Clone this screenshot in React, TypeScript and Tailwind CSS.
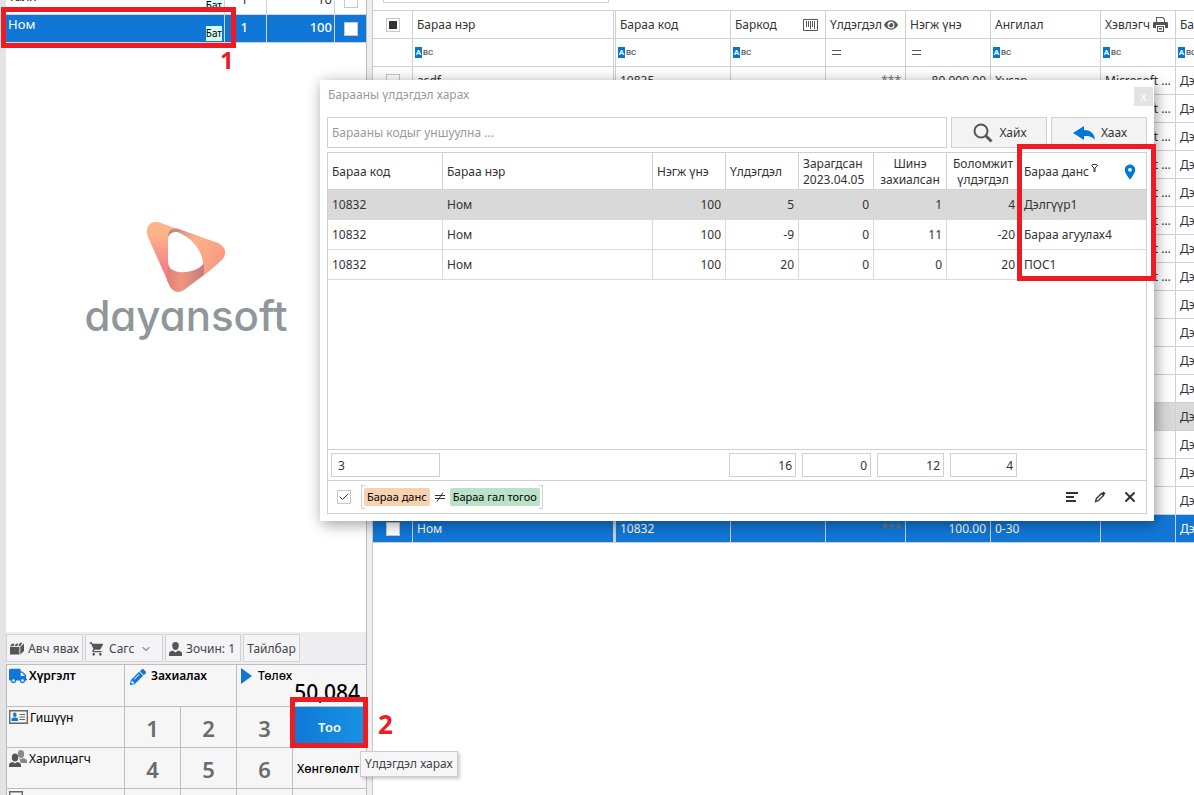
import React from 'react';
import { Check, ChevronDown, X } from 'lucide-react';
import { FaEye, FaPencilAlt, FaTruck } from 'react-icons/fa';
import { MdPlace, MdShoppingCart } from 'react-icons/md';

const stockRows = [
  { code: '10832', name: 'Ном', price: '100', stock: '5', spent: '0', ordered: '1', available: '4', account: 'Дэлгүүр1' },
  { code: '10832', name: 'Ном', price: '100', stock: '-9', spent: '0', ordered: '11', available: '-20', account: 'Бараа агуулах4' },
  { code: '10832', name: 'Ном', price: '100', stock: '20', spent: '0', ordered: '0', available: '20', account: 'ПОС1' },
];

const emptyProduct = { name: '', code: '', stock: '', price: '', category: '', printer: '', account: 'Дэлгүүр' };

const productRows = [
  { ...emptyProduct, name: 'asdf', code: '10835', stock: '***', price: '80,000.00', category: 'Хусар', printer: 'Microsoft Print' },
  ...Array.from({ length: 7 }, () => ({ ...emptyProduct, printer: 'Microsoft Print' })),
  ...Array.from({ length: 8 }, () => emptyProduct),
  { ...emptyProduct, name: 'Ном', code: '10832', stock: '***', price: '100.00', category: '0-30' },
];

const HOVER_ROW = 12;
const SELECTED_ROW = 16;

const Barcode = () => (
  <svg width="15" height="12" viewBox="0 0 15 12" fill="none" stroke="#555" className="shrink-0">
    <path d="M.5.5h14v11H.5zM3.5 2v6M5.5 2v6M7.5 2v8M9.5 2v6M11.5 2v8" />
  </svg>
);

const Printer = () => (
  <svg width="15" height="15" viewBox="0 0 15 15" fill="#555" className="shrink-0">
    <path d="M3 0h7l2 2v3h-1V2.500L9.500 1H4v4H3z" />
    <path d="M1 5h13q1 0 1 1v5h-3V8H3v3H0V6q0-1 1-1z" />
    <path fillRule="evenodd" d="M4 9h7v6H4zm1 1v4h5v-4z" />
    <path d="M6 11h3v1H6zM6 12.500h3v.5H6z" />
  </svg>
);

const Magnifier = () => (
  <svg width="20" height="20" viewBox="0 0 20 20" fill="none" stroke="#555">
    <circle cx="8" cy="8" r="6.500" strokeWidth="2" />
    <path d="M12.500 12.500l6 6" strokeWidth="3" />
  </svg>
);

const BackArrow = () => (
  <svg width="22" height="14" viewBox="0 0 22 14" fill="#0078d7">
    <path d="M0 7L11 0v4C17 4 21.500 7 22 14 19.500 10.500 16 10 11 10v4z" />
  </svg>
);

const Box = () => (
  <svg width="15" height="13" viewBox="0 0 15 13" fill="#555">
    <path d="M0 5h10v8H0zM2 1.500h3L3.500 4H0zM6.500 1.500H9L7.500 4H4.800zM10.500.5h2.500L11 4H8.800zM11 5l4-4v8l-4 4z" />
  </svg>
);

const Person = () => (
  <svg width="13" height="14" viewBox="0 0 13 14" fill="#555">
    <path d="M6.500 0C9 0 9.800 1.500 9.800 3.500 9.800 6 8.500 8 6.500 8S3.200 6 3.200 3.500C3.200 1.500 4 0 6.500 0z" />
    <path d="M0 14v-2.500C0 9.500 2 9 4 8.500l2.500 2L9 8.500c2 .5 4 1 4 3V14z" />
  </svg>
);

const People = () => (
  <svg width="18" height="18" viewBox="0 0 18 18" className="shrink-0">
    <g fill="#888">
      <ellipse cx="12" cy="4" rx="3.200" ry="4" />
      <path d="M11 12v-2l-1-1.500L12 9l2-1c2 .6 4 1 4 3v2h-5.500z" />
    </g>
    <g fill="#555">
      <ellipse cx="6" cy="7.500" rx="3.200" ry="4" />
      <path d="M0 17v-2c0-2 1.800-2.400 3.800-3L6 13.500 8.200 12c2 .6 3.800 1 3.800 3v2z" />
    </g>
  </svg>
);

const IdCard = () => (
  <svg width="19" height="14" viewBox="0 0 19 14" fill="none" className="mt-px shrink-0">
    <path d="M.7.7h17.600v12.600H.7z" stroke="#666" strokeWidth="1.400" />
    <ellipse cx="5.800" cy="4.800" rx="1.800" ry="2.200" fill="#1177d7" />
    <path d="M2.500 11V9c0-1 1.500-1.500 3.300-1.500S9 8 9 9v2z" fill="#1177d7" />
    <path d="M10.500 4.500H16M10.500 7H16M10.500 9.500H16" stroke="#666" />
  </svg>
);

const DayansoftMark = () => (
  <svg width="80" height="72" viewBox="0 0 80 72">
    <defs>
      <linearGradient id="left" x1="0" y1="0" x2="0" y2="1">
        <stop offset="0.200" stopColor="#fbb487" />
        <stop offset="0.750" stopColor="#f4828a" />
      </linearGradient>
      <linearGradient id="right" x1="0" y1="0" x2="1" y2="0.600">
        <stop offset="0" stopColor="#bd7a80" />
        <stop offset="0.450" stopColor="#fbb28b" />
        <stop offset="1" stopColor="#f89a83" />
      </linearGradient>
      <linearGradient id="base" x1="0" y1="0" x2="1" y2="0">
        <stop offset="0" stopColor="#dc7f76" />
        <stop offset="0.400" stopColor="#f2957f" />
        <stop offset="1" stopColor="#c07c80" />
      </linearGradient>
    </defs>
    <path d="M1 12Q0 0 12 1L32 8Q22 8 22 18V61L2 16z" fill="url(#left)" />
    <path d="M22 40C24 54 50 54 58 42L58 54 38 69Q30 74 24 66L21 59z" fill="url(#base)" />
    <path d="M22 14Q24 6 33 8L30 7 72 22Q82 27 78 36 76 40 57 55 60 46 54 34 46 18 34 12 26 9 22 16z" fill="url(#right)" />
    <path d="M22 20Q23 10 32 12C46 16 56 30 57 42 50 52 30 54 24 47Q22 44 22 40z" fill="#fff" />
  </svg>
);

const TextFilter = () => (
  <span className="flex items-center gap-px font-[Roboto,sans-serif] text-[8px] leading-[11px] font-medium text-[#555]">
    <span className="w-[7px] bg-[#0078d7] text-center font-bold text-white">A</span>BC
  </span>
);

const EqualsFilter = () => (
  <svg width="9" height="5" viewBox="0 0 9 5" stroke="#555" className="ml-1">
    <path d="M0 .5h9M0 4.500h9" />
  </svg>
);

const CartTable: React.FC = () => (
  <div className="flex h-[43px] shrink-0 flex-col justify-end overflow-hidden">
    <table className="w-full shrink-0 table-fixed border-separate border-spacing-0 text-[13px] leading-4">
      <colgroup>
        <col />
        <col className="w-[42px]" />
        <col className="w-[68px]" />
        <col className="w-[31px]" />
      </colgroup>
      <tbody>
        {[
          { name: 'Талх', qty: '1', price: '10', selected: false },
          { name: 'Ном', qty: '1', price: '100', selected: true },
        ].map((item) => (
          <tr
            key={item.name}
            className={
              item.selected
                ? 'h-7 bg-[#1177d7] font-medium text-white *:border-r *:border-b *:border-[#cfd3dc]'
                : 'h-7 text-[#333] *:border-r *:border-b *:border-[#cfd3dc]'
            }
          >
            <td className="p-0">
              <div className="flex h-[27px] justify-between px-[2px] pb-px">
                <span className="pt-px font-normal">{item.name}</span>
                <span className="self-end bg-[#d5fbf3] text-[10px] leading-[15px] font-normal text-black">Бат</span>
              </div>
            </td>
            <td className="pr-[18px] pb-1 text-right">{item.qty}</td>
            <td className="pr-[2px] pb-1 text-right">{item.price}</td>
            <td className="border-r-0! p-0 text-center">
              <input
                type="checkbox"
                aria-label={item.name}
                className="mx-auto block size-[14px] appearance-none border border-[#c8c8c8] bg-white"
              />
            </td>
          </tr>
        ))}
      </tbody>
    </table>
  </div>
);

const Toolbar: React.FC = () => {
  const button = 'flex h-7 items-center border border-[#d2d2d6] bg-[#f4f4f6] px-[3px] pt-px whitespace-nowrap';
  return (
    <div className="flex h-8 shrink-0 items-center gap-[2px] bg-[#eeedf2] text-[12px] text-[#444]">
      <button className={`${button} w-[77px] gap-1`}>
        <Box />
        Авч явах
      </button>
      <button className={`${button} w-[78px] gap-1`}>
        <MdShoppingCart className="size-4 text-[#555]" />
        Сагс
        <ChevronDown className="ml-[2px] size-3" />
      </button>
      <button className={`${button} w-[76px] gap-1`}>
        <Person />
        Зочин: 1
      </button>
      <button className={`${button} w-[57px] justify-center`}>Тайлбар</button>
    </div>
  );
};

const Keypad: React.FC = () => {
  const key = 'border-r border-b border-[#bdbdbd] pt-[2px] text-[22px] font-semibold text-[#6b6b6b]';
  const action = 'flex items-start gap-[2px] border-r border-b border-[#bdbdbd] pt-[2px] pl-[2px] text-[12px] leading-[18px] text-black';
  return (
    <div className="h-[131px] shrink-0 overflow-hidden border-t border-l border-[#bdbdbd] bg-[#f6f6f6]">
      <div className="grid grid-cols-[118px_56px_56px_56px_1fr] grid-rows-[42px_41px_41px_41px]">
        <button className={`${action} font-semibold`}>
          <FaTruck className="size-[18px] text-[#1177d7]" />
          Хүргэлт
        </button>
        <button className={`${action} col-span-2 font-semibold`}>
          <FaPencilAlt className="mx-[3px] mt-[2px] size-4 text-[#1177d7]" />
          Захиалах
        </button>
        <button className={`${action} col-span-2 overflow-hidden border-r-0 font-medium`}>
          <svg width="11" height="16" viewBox="0 0 11 16" fill="#1177d7" className="mx-[2px] mt-px shrink-0">
            <path d="M0 0l11 8-11 8z" />
          </svg>
          <span className="pl-[2px]">Төлөх</span>
          <span className="mt-3 text-[21px] leading-[26px]">50,084</span>
        </button>

        <button className={action}>
          <IdCard />
          Гишүүн
        </button>
        <button className={key}>1</button>
        <button className={key}>2</button>
        <button className={key}>3</button>
        <button className="bg-linear-to-r from-[#1177d7] to-[#1794e3] pt-px text-[13px] font-semibold text-white">Тоо</button>

        <button className={action}>
          <People />
          Харилцагч
        </button>
        <button className={key}>4</button>
        <button className={key}>5</button>
        <button className={key}>6</button>
        <button className="border-b border-[#bdbdbd] pt-px pl-1 text-left text-[12px] font-medium whitespace-nowrap text-black">
          Хөнгөлөлт
        </button>

        <button className={action} aria-label="Карт">
          <svg width="14" height="14" viewBox="0 0 14 14" fill="none" stroke="#666">
            <path d="M.7.7h12.600v12.600H.7z" strokeWidth="1.400" />
          </svg>
        </button>
        <button className={key} aria-label="7" />
        <button className={key} aria-label="8" />
        <button className={key} aria-label="9" />
        <button className="border-b border-[#bdbdbd]" aria-label="Нэмэлт" />
      </div>
    </div>
  );
};

const ProductTable: React.FC = () => (
  <table className="w-[923px] table-fixed border-separate border-spacing-0 border-t border-[#d0d0d0] text-left text-[12px] leading-4 text-[#333]">
    <colgroup>
      <col className="w-10" />
      <col className="w-[203px]" />
      <col className="w-[115px]" />
      <col className="w-[95px]" />
      <col className="w-20" />
      <col className="w-[85px]" />
      <col className="w-[110px]" />
      <col className="w-[75px]" />
      <col className="w-[120px]" />
    </colgroup>
    <thead className="[&_th]:border-r [&_th]:border-b [&_th]:border-[#d0d0d0] [&_th]:px-1 [&_th]:py-0 [&_th]:font-normal">
      <tr className="h-7">
        <th>
          <span className="mx-auto flex size-[14px] items-center justify-center border border-[#c8c8c8]">
            <span className="size-2 bg-[#333]" />
          </span>
        </th>
        <th className="border-r-3! border-double">Бараа нэр</th>
        <th>Бараа код</th>
        <th>
          <span className="flex items-center justify-between pr-[3px]">
            Баркод <Barcode />
          </span>
        </th>
        <th>
          <span className="flex items-center justify-between pr-[3px]">
            Үлдэгдэл <FaEye className="size-[14px] shrink-0 text-[#555]" />
          </span>
        </th>
        <th>Нэгж үнэ</th>
        <th>Ангилал</th>
        <th>
          <span className="flex items-center justify-between pr-[3px]">
            Хэвлэгч <Printer />
          </span>
        </th>
        <th>Бараа данс</th>
      </tr>
      <tr className="h-7 [&_th]:px-[2px]!">
        <th />
        <th className="border-r-3! border-double"><TextFilter /></th>
        <th><TextFilter /></th>
        <th><TextFilter /></th>
        <th><EqualsFilter /></th>
        <th><EqualsFilter /></th>
        <th><TextFilter /></th>
        <th><TextFilter /></th>
        <th><TextFilter /></th>
      </tr>
    </thead>
    <tbody className="[&_td]:border-r [&_td]:border-b [&_td]:border-[#ccd0d8] [&_td]:px-1 [&_td]:py-0">
      {productRows.map((row, index) => (
        <tr
          key={index}
          className={
            index === SELECTED_ROW ? 'h-7 bg-[#1177d7] text-white' : index === HOVER_ROW ? 'h-7 bg-[#d9d9d9]' : 'h-7'
          }
        >
          <td>
            <input
              type="checkbox"
              aria-label={`Мөр ${index + 1}`}
              className="mx-auto block size-[14px] appearance-none border border-[#c8c8c8] bg-white"
            />
          </td>
          <td className={index === SELECTED_ROW ? 'border-r-3!' : 'border-r-3! border-double'}>{row.name}</td>
          <td>{row.code}</td>
          <td />
          <td className="text-right text-[#777]">{row.stock}</td>
          <td className="text-right">{row.price}</td>
          <td>{row.category}</td>
          <td className="truncate">{row.printer}</td>
          <td>{row.account}</td>
        </tr>
      ))}
    </tbody>
  </table>
);

const StockDialog: React.FC = () => (
  <div
    role="dialog"
    aria-label="Барааны үлдэгдэл харах"
    className="absolute top-20 right-10 left-80 bg-white px-[7px] pb-[7px] text-[12px] leading-4 text-[#333] shadow-[2px_3px_14px_rgba(0,0,0,0.4)]"
  >
    <div className="-mr-[6px] flex h-[37px] justify-between pt-[7px]">
      <h2 className="pl-px text-[#999]">Барааны үлдэгдэл харах</h2>
      <button aria-label="Хаах" className="size-[19px] bg-[#e3e3e3] text-center text-[12px] leading-4 text-white">
        x
      </button>
    </div>

    <div className="mb-1 flex gap-1">
      <input
        type="text"
        aria-label="Барааны код"
        placeholder="Барааны кодыг уншуулна ..."
        className="h-[31px] min-w-0 flex-1 border border-[#d0d0d0] px-1 placeholder:text-[#999]"
      />
      <button className="flex h-[31px] w-24 items-center justify-center gap-[6px] border border-[#d0d0d0] bg-[#f3f3f3] pl-[2px]">
        <Magnifier />
        Хайх
      </button>
      <button className="flex h-[31px] w-24 items-center justify-center gap-[6px] border border-[#d0d0d0] bg-[#f3f3f3] pl-[2px]">
        <BackArrow />
        Хаах
      </button>
    </div>

    <div className="border border-[#d0d0d0]">
      <div className="h-[296px]">
        <table className="w-full table-fixed border-separate border-spacing-0 text-left [&_td]:px-1 [&_td]:py-0 [&_th]:px-1 [&_th]:pt-[2px] [&_th]:pb-0 [&_th]:font-normal">
          <colgroup>
            <col className="w-[115px]" />
            <col className="w-[210px]" />
            <col className="w-[73px]" />
            <col className="w-[73px]" />
            <col className="w-[75px]" />
            <col className="w-[73px]" />
            <col className="w-[73px]" />
            <col />
          </colgroup>
          <thead>
            <tr className="h-[37px] *:border-r *:border-b *:border-[#d0d0d0]">
              <th>Бараа код</th>
              <th>Бараа нэр</th>
              <th>Нэгж үнэ</th>
              <th>Үлдэгдэл</th>
              <th>Зарагдсан 2023.04.05</th>
              <th className="text-center">Шинэ захиалсан</th>
              <th className="px-0! text-center">Боломжит үлдэгдэл</th>
              <th className="border-r-0!">
                <span className="flex items-center">
                  Бараа данс
                  <svg width="7" height="8" viewBox="0 0 7 8" fill="none" stroke="#333" className="mb-2 ml-[2px]">
                    <path d="M.5 1.500L2 .5h3l1.500 1L4 4v4H3V4z" />
                  </svg>
                  <MdPlace className="mr-[3px] ml-auto size-[18px] text-[#0078d7]" />
                </span>
              </th>
            </tr>
          </thead>
          <tbody>
            {stockRows.map((row, index) => (
              <tr
                key={row.account}
                className={
                  index === 0
                    ? 'h-[30px] bg-[#d9d9d9] *:border-r *:border-b *:border-[#d9d9d9]'
                    : 'h-[30px] *:border-r *:border-b *:border-[#d9d9d9]'
                }
              >
                <td>{row.code}</td>
                <td>{row.name}</td>
                <td className="text-right">{row.price}</td>
                <td className="text-right">{row.stock}</td>
                <td className="text-right">{row.spent}</td>
                <td className="text-right">{row.ordered}</td>
                <td className="text-right">{row.available}</td>
                <td className="border-r-0!">{row.account}</td>
              </tr>
            ))}
          </tbody>
        </table>
      </div>

      <div className="grid h-8 grid-cols-[115px_210px_73px_73px_75px_73px_73px_1fr] items-center border-y border-[#d0d0d0] text-right *:mx-[3px] *:h-6 *:border *:border-[#d0d0d0] *:px-[3px] *:pt-px *:leading-[22px]">
        <output className="px-[6px]! text-left">3</output>
        <output className="col-start-4">16</output>
        <output>0</output>
        <output>12</output>
        <output>4</output>
      </div>

      <div className="flex h-8 items-center px-2">
        <label className="ml-px flex size-[14px] items-center justify-center border border-[#c8c8c8]">
          <input type="checkbox" defaultChecked aria-label="Шүүлтүүр" className="peer sr-only" />
          <Check className="hidden size-3 peer-checked:block" />
        </label>
        <div className="ml-[10px] flex items-center text-[11px] text-black">
          <span className="-mr-px h-6 w-1 border-y border-l border-[#d0d0d0]" />
          <span className="rounded-xs bg-[#f8d1b0] px-[3px] leading-[18px]">Бараа данс</span>
          <svg width="20" height="10" viewBox="0 0 20 10" fill="none" stroke="#333">
            <path d="M5 3.500h10M5 6.500h10M13 .5l-6 9" />
          </svg>
          <span className="rounded-xs bg-[#bae2c6] px-[3px] leading-[18px]">Бараа гал тогоо</span>
          <span className="-ml-px h-6 w-1 border-y border-r border-[#d0d0d0]" />
        </div>
        <div className="ml-auto flex items-center gap-4">
          <button aria-label="Жагсаалт">
            <svg width="13" height="10" viewBox="0 0 13 10" fill="#333">
              <path d="M1 0h12v2H1zM1 4h8v2H1zM1 8h10v2H1z" />
            </svg>
          </button>
          <button aria-label="Засах">
            <svg width="12" height="12" viewBox="0 0 12 12" fill="none" stroke="#333">
              <path d="M1.500 10.500l.8-2.800L7.500 2.500l2 2-5.200 5.200z" strokeWidth="1.300" />
              <path d="M8.500 1.500l2 2" strokeWidth="3" />
            </svg>
          </button>
          <button aria-label="Арилгах">
            <X className="size-4 text-[#333]" strokeWidth={3} />
          </button>
        </div>
      </div>
    </div>

    <div className="pointer-events-none absolute top-16 -right-[2px] h-[137px] w-[139px] border-5 border-[#ed1c24]" />
  </div>
);

export default function App() {
  return (
    <div className="relative flex h-screen overflow-hidden bg-white font-['Noto_Sans',sans-serif]">
      <aside className="flex w-[372px] shrink-0 flex-col border-r-5 border-l-6 border-r-[#eeedf2] border-l-[#e3e3e5]">
        <div className="flex min-h-0 flex-1 flex-col border-r border-[#bdbdbd]">
          <CartTable />
          <div className="flex min-h-0 flex-1 flex-col items-center overflow-hidden pt-[178px]">
            <DayansoftMark />
            <span className="font-[Inter,sans-serif] text-[42px] leading-[46px] font-medium text-[#8f979b] [font-feature-settings:'cv11']">
              dayansoft
            </span>
          </div>
          <Toolbar />
          <Keypad />
        </div>
      </aside>

      <main className="min-w-0 flex-1 overflow-hidden border-l border-[#c8c8cc]">
        <div className="mb-[7px] flex h-[3px] items-end overflow-hidden pl-[10px]">
          <input type="text" aria-label="Хайлт" className="h-7 w-[226px] shrink-0 border border-[#d0d0d0]" />
        </div>
        <ProductTable />
      </main>

      <StockDialog />

      <div className="pointer-events-none absolute top-[7px] left-px h-[41px] w-[235px] border-5 border-[#ed1c24]" />
      <span className="absolute top-[45px] left-[220px] text-[24px] leading-[30px] font-bold text-[#ed1c24]">1</span>

      <div className="pointer-events-none absolute bottom-[47px] left-[290px] h-[51px] w-[78px] border-5 border-[#ed1c24]" />
      <span className="absolute bottom-14 left-[378px] text-[26px] leading-[30px] font-bold text-[#ed1c24]">2</span>
      <div
        role="tooltip"
        className="absolute bottom-[18px] left-[360px] border border-[#ccc] bg-[#f6f6f8] px-1 text-[12px] leading-6 text-[#444] shadow-[2px_2px_3px_rgba(0,0,0,0.2)]"
      >
        Үлдэгдэл харах
      </div>
    </div>
  );
}
